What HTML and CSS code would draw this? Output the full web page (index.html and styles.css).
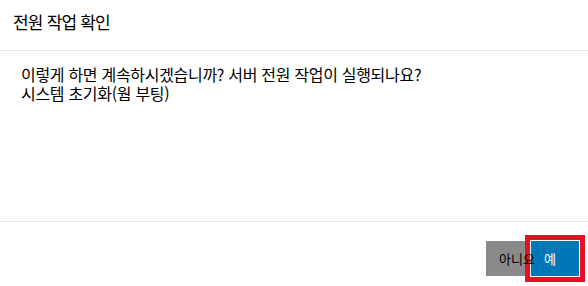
FILE: index.html
```html
<!DOCTYPE html>
<html lang="ko">
<head>
    <meta charset="UTF-8">
    <meta name="viewport" content="width=device-width, initial-scale=1.0">
    <title>전원 작업 확인</title>
    <link rel="stylesheet" href="styles.css">
</head>
<body>
    <div class="dialog">
        <header class="dialog-header">
            <h1 class="dialog-title">전원 작업 확인</h1>
        </header>

        <main class="dialog-body">
            <p>이렇게 하면 계속하시겠습니까? 서버 전원 작업이 실행되나요?</p>
            <p>시스템 초기화(웜 부팅)</p>
        </main>

        <footer class="dialog-footer">
            <button type="button" class="btn btn-no"><span>아니요</span></button>
            <button type="button" class="btn btn-yes">예</button>
        </footer>
    </div>
</body>
</html>
```

FILE: styles.css
```css
body {
    font-family: "Noto Sans CJK KR", "Noto Sans", sans-serif;
    background-color: #fff;
    color: #000;
    margin: 0;
    padding: 0;
}

.dialog {
    width: 588px;
    height: 286px;
    display: flex;
    flex-direction: column;
}

.dialog-header {
    padding: 10px 13px 16px;
    border-bottom: 1px solid #e5e5e5;
}

.dialog-title {
    margin: 0;
    font-size: 17px;
    font-weight: normal;
    line-height: 24px;
    letter-spacing: -0.8px;
}

.dialog-body {
    flex: 1;
    padding: 14px 21px;
    font-size: 16px;
    line-height: 19px;
    letter-spacing: -0.3px;
}

.dialog-body p {
    margin: 0;
}

.dialog-footer {
    border-top: 1px solid #e5e5e5;
    padding: 19px 9px 10px;
    display: flex;
    justify-content: flex-end;
}

.btn {
    height: 35px;
    padding: 0 13px;
    border: none;
    margin: 0;
    font-family: inherit;
    font-size: 13px;
    text-align: left;
    white-space: nowrap;
    cursor: pointer;
}

.btn-no {
    width: 45px;
    background: #8a8a8a;
    color: #000;
    overflow: visible;
}

.btn-no span {
    position: relative;
    z-index: 1;
}

.btn-yes {
    width: 48px;
    background: #0077b6;
    color: #fff;
    box-shadow: 0 0 0 1px #fff, 0 0 0 6px #e81123;
}
```
